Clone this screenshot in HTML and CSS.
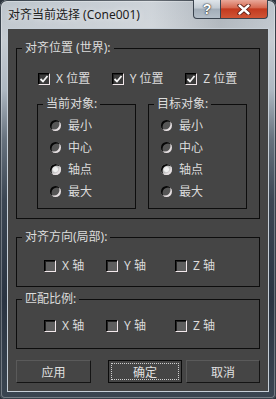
FILE: index.html
```html
<!DOCTYPE html>
<html lang="zh-CN">
<head>
<meta charset="UTF-8" />
<meta name="viewport" content="width=device-width, initial-scale=1" />
<title>对齐当前选择</title>
<link rel="stylesheet" href="styles.css">
</head>
<body>

  <div class="window">
    <div class="titlebar">
      <span class="title">对齐当前选择 (Cone001)</span>
      <div class="caption-btns">
        <span class="cap-btn help">?</span>
        <span class="cap-btn close">
          <svg width="14" height="11" viewBox="0 0 14 11">
            <path d="M2.5 1.5 L11.5 9.5 M11.5 1.5 L2.5 9.5" stroke="#5a1a10" stroke-width="4.2" stroke-linecap="round"/>
            <path d="M2.5 1.5 L11.5 9.5 M11.5 1.5 L2.5 9.5" stroke="#fff" stroke-width="2.4" stroke-linecap="round"/>
          </svg>
        </span>
      </div>
    </div>

    <div class="client">
      <!-- 对齐位置 -->
      <fieldset class="group group-world">
        <legend>对齐位置 (世界):</legend>
        <div class="check-row">
          <label class="check"><span class="box checked"><svg width="10" height="10" viewBox="0 0 10 10"><path d="M1.5 5 L4 7.5 L8.5 2" fill="none" stroke="#f4f4f4" stroke-width="1.8"/></svg></span>X 位置</label>
          <label class="check"><span class="box checked"><svg width="10" height="10" viewBox="0 0 10 10"><path d="M1.5 5 L4 7.5 L8.5 2" fill="none" stroke="#f4f4f4" stroke-width="1.8"/></svg></span>Y 位置</label>
          <label class="check"><span class="box checked"><svg width="10" height="10" viewBox="0 0 10 10"><path d="M1.5 5 L4 7.5 L8.5 2" fill="none" stroke="#f4f4f4" stroke-width="1.8"/></svg></span>Z 位置</label>
        </div>

        <div class="sub-groups">
          <fieldset class="group sub">
            <legend>当前对象:</legend>
            <div class="radio"><span class="dot"></span>最小</div>
            <div class="radio"><span class="dot"></span>中心</div>
            <div class="radio"><span class="dot on"></span>轴点</div>
            <div class="radio"><span class="dot"></span>最大</div>
          </fieldset>
          <fieldset class="group sub">
            <legend>目标对象:</legend>
            <div class="radio"><span class="dot"></span>最小</div>
            <div class="radio"><span class="dot"></span>中心</div>
            <div class="radio"><span class="dot on"></span>轴点</div>
            <div class="radio"><span class="dot"></span>最大</div>
          </fieldset>
        </div>
      </fieldset>

      <!-- 对齐方向 -->
      <fieldset class="group group-dir">
        <legend>对齐方向(局部):</legend>
        <div class="check-row axis-row">
          <label class="check"><span class="box"></span>X 轴</label>
          <label class="check"><span class="box"></span>Y 轴</label>
          <label class="check"><span class="box"></span>Z 轴</label>
        </div>
      </fieldset>

      <!-- 匹配比例 -->
      <fieldset class="group group-scale">
        <legend>匹配比例:</legend>
        <div class="check-row axis-row">
          <label class="check"><span class="box"></span>X 轴</label>
          <label class="check"><span class="box"></span>Y 轴</label>
          <label class="check"><span class="box"></span>Z 轴</label>
        </div>
      </fieldset>

      <div class="buttons">
        <button class="btn btn-apply">应用</button>
        <button class="btn btn-ok"><span class="focus">确定</span></button>
        <button class="btn btn-cancel">取消</button>
      </div>
    </div>
  </div>

</body>
</html>
```

FILE: styles.css
```css
body {
  margin: 0;
  background: #2b333d;
  font-family: "Noto Sans", "Noto Sans CJK SC", sans-serif;
  font-size: 12px;
}
.window {
  width: 276px;
  height: 399px;
  border-radius: 7px 7px 5px 5px;
  overflow: hidden;
  background: linear-gradient(180deg, #bcc4cc 0, #c6ccd2 40px, #aeb8c2 90px, #66717d 140px, #3b4653 200px, #2a3442 300px, #3a4551 399px);
  box-shadow: inset 0 0 0 1px #37404a, inset 0 0 0 2px rgba(255,255,255,0.3);
}
.titlebar {
  height: 29px;
  padding: 0 8px;
  display: flex;
  justify-content: space-between;
  align-items: flex-start;
  background: linear-gradient(90deg, rgba(255,255,255,0) 0, rgba(255,255,255,0.25) 55%, rgba(0,0,0,0.08) 80%, rgba(0,0,0,0) 100%);
}
.title {
  padding-top: 7px;
  line-height: 16px;
  color: #1c1c1c;
  text-shadow: 0 0 6px rgba(255,255,255,0.8);
}
.caption-btns {
  display: flex;
  height: 19px;
}
.cap-btn {
  height: 19px;
  box-sizing: border-box;
  border: 1px solid #3a434e;
  border-top: none;
  display: flex;
  align-items: center;
  justify-content: center;
}
.help {
  width: 28px;
  border-radius: 0 0 0 4px;
  background: linear-gradient(#dfe5ea, #c2cad2 45%, #a2adb8 50%, #b4bec8);
  color: #fff;
  font-family: "Liberation Sans", sans-serif;
  font-weight: 700;
  font-size: 14px;
  text-shadow: 0 0 2px #222, 0 0 1px #222;
}
.close {
  width: 47px;
  border-left: none;
  border-radius: 0 0 4px 0;
  background: linear-gradient(#e9a899, #d66a52 42%, #c33a1f 50%, #cf5535 100%);
}
.client {
  margin: 0 8px;
  height: 362px;
  box-sizing: border-box;
  padding: 12px 8px 8px;
  background: #454545;
  color: #dcdcdc;
  box-shadow: 0 0 0 1px #c5ced7;
}
.group {
  margin: 0;
  padding: 0;
  min-width: 0;
  border: 1px solid #0d0d0d;
}
legend {
  padding: 0 3px;
  margin-left: 5px;
  height: 14px;
  line-height: 14px;
}
.group-world {
  padding: 17px 0 9px 0;
}
.check-row {
  display: flex;
  height: 14px;
}
.group-world .check-row {
  margin-left: 21px;
}
.check {
  width: 75px;
  display: flex;
  align-items: center;
  gap: 6px;
  line-height: 14px;
}
.box {
  width: 12px;
  height: 12px;
  box-sizing: border-box;
  border: 1px solid;
  border-color: #000 #f2e8eb #f2e8eb #000;
  background: #5e5e5e;
  box-shadow: inset 1px 1px 0 #222;
  display: flex;
  align-items: center;
  justify-content: center;
}
.box.checked {
  background: #3b3b3b;
}
.sub-groups {
  display: flex;
  gap: 12px;
  margin: 11px 0 0 20px;
}
.sub {
  width: 99px;
  box-sizing: border-box;
  padding: 3px 0 6px 0;
}
.radio {
  height: 22px;
  margin-left: 12px;
  display: flex;
  align-items: center;
  gap: 7px;
}
.dot {
  width: 11px;
  height: 11px;
  box-sizing: border-box;
  border-radius: 50%;
  background: #555;
  box-shadow: inset 1.5px 1.5px 0 #060606, inset -1.5px -1.5px 0 #e6e0e2;
}
.dot.on {
  background: radial-gradient(circle, #f0f0f0 0 2px, #bdbdbd 3.5px);
}
.group-dir {
  margin-top: 11px;
  padding: 15px 0 13px 0;
}
.group-scale {
  margin-top: 5px;
  padding: 13px 0 15px 0;
}
.axis-row {
  margin-left: 27px;
}
.axis-row .check:nth-child(1) {
  width: 62px;
}
.axis-row .check:nth-child(2) {
  width: 69px;
}
.buttons {
  display: flex;
  margin-top: 11px;
}
.btn {
  width: 74px;
  height: 23px;
  box-sizing: border-box;
  padding: 0;
  background: #454545;
  color: #e0e0e0;
  font-family: "Noto Sans", "Noto Sans CJK SC", sans-serif;
  font-size: 12px;
  border: 1px solid;
  border-color: #5a5a5a #141414 #141414 #5a5a5a;
  display: flex;
  align-items: center;
  justify-content: center;
}
.btn-apply {
  width: 75px;
}
.btn-ok {
  margin-left: 17px;
  border: 1px solid #0b0b0b;
  padding: 2px;
}
.btn-ok .focus {
  flex: 1;
  align-self: stretch;
  display: flex;
  align-items: center;
  justify-content: center;
  border: 1px dotted #cfcfcf;
}
.btn-cancel {
  margin-left: 4px;
}
```
